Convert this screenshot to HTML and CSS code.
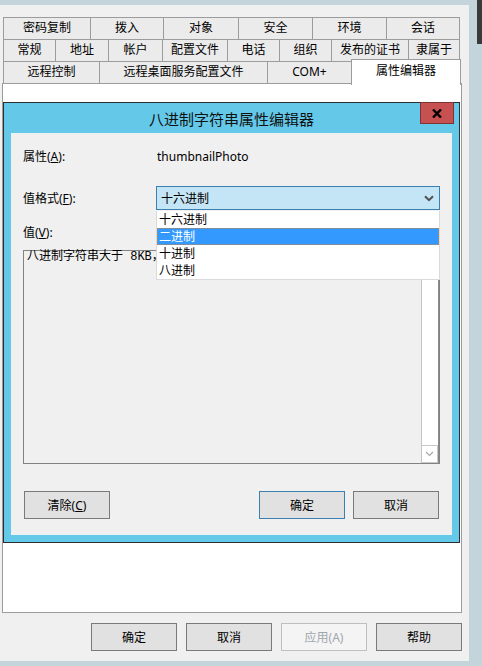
FILE: index.html
```html
<!DOCTYPE html>
<html lang="zh-CN">
<head>
    <meta charset="UTF-8">
    <meta name="viewport" content="width=device-width, initial-scale=1.0">
    <title>属性</title>
    <link rel="stylesheet" href="styles.css">
</head>
<body>
    <div class="backwin"></div>
    <div class="sheet">
        <!-- 选项卡 -->
        <div class="tabs">
            <div class="tab-row row1">
                <div class="tab">密码复制</div>
                <div class="tab">拨入</div>
                <div class="tab">对象</div>
                <div class="tab">安全</div>
                <div class="tab">环境</div>
                <div class="tab">会话</div>
            </div>
            <div class="tab-row row2">
                <div class="tab">常规</div>
                <div class="tab">地址</div>
                <div class="tab">帐户</div>
                <div class="tab">配置文件</div>
                <div class="tab">电话</div>
                <div class="tab">组织</div>
                <div class="tab">发布的证书</div>
                <div class="tab">隶属于</div>
            </div>
            <div class="tab-row row3">
                <div class="tab">远程控制</div>
                <div class="tab">远程桌面服务配置文件</div>
                <div class="tab">COM+</div>
                <div class="tab tab-active">属性编辑器</div>
            </div>
        </div>
        <div class="page"></div>
        <div class="sheet-btns">
            <button class="btn">确定</button>
            <button class="btn">取消</button>
            <button class="btn btn-disabled">应用(A)</button>
            <button class="btn">帮助</button>
        </div>

        <!-- 弹出对话框 -->
        <div class="dlg">
            <div class="dlg-title">八进制字符串属性编辑器</div>
            <div class="dlg-close">
                <svg width="10" height="9" viewBox="0 0 10 9"><path d="M1 0.5 L9 8.5 M9 0.5 L1 8.5" stroke="#000" stroke-width="2.4"/></svg>
            </div>
            <div class="dlg-body">
                <div class="row row-prop">
                    <div class="lbl">属性(<u>A</u>):</div>
                    <div class="val">thumbnailPhoto</div>
                </div>
                <div class="row row-fmt">
                    <div class="lbl">值格式(<u>F</u>):</div>
                    <div class="select-wrap">
                        <div class="select">
                            <span>十六进制</span>
                            <svg width="10" height="7" viewBox="0 0 10 7"><path d="M1 1.2 L5 5.2 L9 1.2" fill="none" stroke="#505050" stroke-width="2"/></svg>
                        </div>
                        <div class="droplist">
                            <div class="opt">十六进制</div>
                            <div class="opt opt-sel">二进制</div>
                            <div class="opt">十进制</div>
                            <div class="opt">八进制</div>
                        </div>
                    </div>
                </div>
                <div class="val-lbl">值(<u>V</u>):</div>
                <div class="textbox">
                    <div class="text">八进制字符串大于 8KB，</div>
                    <div class="vscroll">
                        <div class="vscroll-btn">
                            <svg width="9" height="6" viewBox="0 0 9 6"><path d="M1 1 L4.5 4.5 L8 1" fill="none" stroke="#a8a8a8" stroke-width="1.2"/></svg>
                        </div>
                    </div>
                </div>
                <div class="dlg-btns">
                    <button class="btn">清除(<u>C</u>)</button>
                    <div class="btn-group">
                        <button class="btn btn-default">确定</button>
                        <button class="btn">取消</button>
                    </div>
                </div>
            </div>
        </div>
    </div>
</body>
</html>
```

FILE: styles.css
```css
*{margin:0;padding:0;box-sizing:border-box;}
body{
    background:#c3d5db;
    font-family:"Noto Sans","Noto Sans CJK SC",sans-serif;
    font-size:12px;color:#000;
    width:482px;height:666px;overflow:hidden;
    position:relative;
}
/* 背后的窗口边缘 */
.backwin{
    position:absolute;left:477px;top:0;
    width:5px;height:44px;background:#3a3a3a;
}
.sheet{
    width:469px;height:656px;margin-top:5px;
    background:#f0f0f0;padding-top:12px;
    position:relative;
}
/* 选项卡 */
.tabs{margin-left:3px;}
.tab-row{display:grid;height:22px;align-items:start;}
.row1{grid-template-columns:87px 73px 75px 74px 74px 74px;}
.row2{grid-template-columns:52px 53px 54px 65px 52px 52px 77px 52px;}
.row3{grid-template-columns:96px 168px 84px 110px;}
.tab{
    height:22px;line-height:20px;text-align:center;
    background:#ebebeb;
    border-top:1px solid #9c9c9c;border-left:1px solid #9c9c9c;
    white-space:nowrap;
}
.tab:last-child{border-right:1px solid #9c9c9c;}
.tab-active{
    background:#fff;height:26px;margin-top:-2px;
    line-height:22px;position:relative;z-index:1;
}
.page{
    margin-left:2px;width:460px;height:530px;
    background:#fff;border:1px solid #9c9c9c;
}
/* 按钮 */
.btn{
    width:86px;height:28px;
    background:#e1e1e1;border:1px solid #7a7a7a;
    font:inherit;color:#000;
}
.btn-default{border-color:#3c7fb1;}
.btn-disabled{background:#f4f4f4;border-color:#bfbfbf;color:#a0a6ad;}
.sheet-btns{
    display:flex;justify-content:flex-end;gap:9px;
    margin-top:10px;padding-right:7px;
}
/* 对话框 */
.dlg{
    position:absolute;left:3px;top:97px;
    width:457px;height:441px;
    background:#64c8e9;border:1px solid #2e2e2e;
    padding:0 7px 7px;
}
.dlg-title{
    height:30px;display:flex;align-items:center;justify-content:center;
    font-size:15px;color:#111;
}
.dlg-close{
    position:absolute;right:5px;top:-1px;
    width:34px;height:22px;
    background:#c75050;border:1px solid #7d3434;
    display:flex;align-items:center;justify-content:center;
}
.dlg-body{
    height:402px;background:#f0f0f0;
    padding:11px 12px 0;
}
.row{display:flex;align-items:center;height:24px;}
.row-fmt{margin-top:18px;}
.lbl{width:133px;}
.val{padding-left:1px;}
.select-wrap{position:relative;width:284px;height:24px;}
.select{
    height:24px;display:flex;align-items:center;justify-content:space-between;
    background:#c4e5f6;border:1px solid #3c7fb1;
    padding:0 5px 0 4px;
}
.droplist{
    position:absolute;left:0;top:25px;width:284px;z-index:2;
    background:#fff;border:1px solid #dadada;border-top:none;
}
.opt{height:17px;line-height:17px;padding-left:2px;}
.opt-sel{
    background:#3399ff;color:#fff;
    outline:1px dotted #c8843e;outline-offset:-1px;
}
.val-lbl{margin-top:15px;height:16px;line-height:16px;}
.textbox{
    margin-top:9px;height:214px;
    border:1px solid #828282;background:#f0f0f0;
    display:flex;
}
.text{
    flex:1;padding:0 3px;line-height:12px;
    font-family:"Liberation Mono","Noto Sans CJK SC",monospace;
}
.vscroll{
    width:18px;background:#fff;
    border-left:1px solid #c4c4c4;border-right:1px solid #8a8a8a;
    display:flex;flex-direction:column;justify-content:flex-end;
}
.vscroll-btn{
    height:18px;border:1px solid #c8c8c8;border-left:none;
    display:flex;align-items:center;justify-content:center;
}
.dlg-btns{
    margin-top:27px;padding:0 1px;
    display:flex;justify-content:space-between;
}
.btn-group{display:flex;gap:8px;}
```
